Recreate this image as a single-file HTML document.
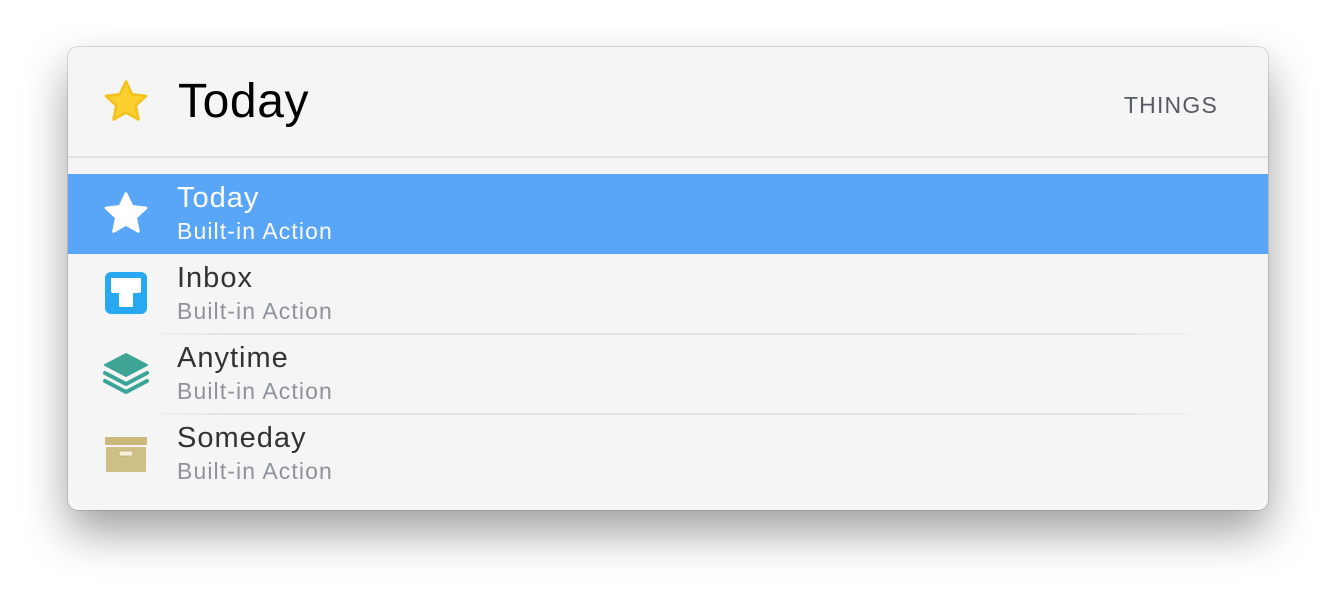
<!DOCTYPE html>
<html><head><style>
body{margin:0;width:1336px;height:598px;background:#fff;font-family:"Liberation Sans",sans-serif;overflow:hidden;position:relative}
.win{position:absolute;left:68px;top:47px;width:1200px;height:463px;background:#f5f5f5;border-radius:10px;box-shadow:0 22px 45px rgba(0,0,0,0.38),0 0 0 1px rgba(0,0,0,0.12);overflow:hidden}
.hdr{position:absolute;left:0;top:0;width:1200px;height:109px;border-bottom:2px solid #e2e2e2}
.ht{position:absolute;left:110px;top:27px;font-size:48px;letter-spacing:0.6px;color:#000}
.things{position:absolute;right:50px;top:45px;font-size:23px;letter-spacing:1.2px;color:#555a63}
.row{position:absolute;left:0;width:1200px;height:80px}
.row .t{position:absolute;left:109px;top:8px;font-size:29px;letter-spacing:1px;color:#333}
.row .s{position:absolute;left:109px;top:44px;font-size:23px;letter-spacing:1.1px;color:#8e939b}
.sel{background:#59a5f8}
.sel .t,.sel .s{color:#fff}
.sep{position:absolute;left:70px;width:1070px;height:2px;background:linear-gradient(90deg,rgba(220,220,220,0),#e0e0e0 10%,#e0e0e0 90%,rgba(220,220,220,0))}
.ic{position:absolute;left:34px;top:16px}
</style></head><body>
<div class="win">
 <div class="hdr">
  <svg style="position:absolute;left:34px;top:31px" width="48" height="46" viewBox="0 0 24 23"><path d="M12 1.8l3 6.4 7 .8-5.2 4.8 1.4 6.9L12 17.2l-6.2 3.5 1.4-6.9L2 9l7-.8z" fill="#fcd02e" stroke="#f2c31f" stroke-width="1.4" stroke-linejoin="round"/></svg>
  <div class="ht">Today</div>
  <div class="things">THINGS</div>
 </div>
 <div class="row sel" style="top:127px">
  <svg class="ic" width="48" height="46" viewBox="0 0 24 23"><path d="M12 1.8l3 6.4 7 .8-5.2 4.8 1.4 6.9L12 17.2l-6.2 3.5 1.4-6.9L2 9l7-.8z" fill="#fff" stroke="#fff" stroke-width="1.4" stroke-linejoin="round"/></svg>
  <div class="t">Today</div><div class="s">Built-in Action</div>
 </div>
 <div class="row" style="top:207px">
  <svg class="ic" style="left:36px;top:17px" width="44" height="44" viewBox="0 0 44 44"><rect x="1" y="1" width="42" height="42" rx="6" fill="#29a8f2"/><path d="M7 7h30v13a2 2 0 0 1-2 2h-6v13a1 1 0 0 1-1 1h-12a1 1 0 0 1-1-1v-13h-6a2 2 0 0 1-2-2z" fill="#fff"/></svg>
  <div class="t">Inbox</div><div class="s">Built-in Action</div>
 </div>
 <div class="sep" style="top:286px"></div>
 <div class="row" style="top:287px">
  <svg class="ic" style="left:34px;top:17px" width="48" height="46" viewBox="0 0 48 46"><path d="M3 30l21 11 21-11" fill="none" stroke="#3aa597" stroke-width="4" stroke-linecap="round" stroke-linejoin="round"/><path d="M3 22l21 11 21-11" fill="none" stroke="#3aa597" stroke-width="4" stroke-linecap="round" stroke-linejoin="round"/><path d="M24 3l21 11-21 11-21-11z" fill="#3ea596" stroke="#3ea596" stroke-width="2" stroke-linejoin="round"/></svg>
  <div class="t">Anytime</div><div class="s">Built-in Action</div>
 </div>
 <div class="sep" style="top:366px"></div>
 <div class="row" style="top:367px">
  <svg class="ic" style="left:36px;top:22px" width="44" height="38" viewBox="0 0 44 38"><rect x="1" y="1" width="42" height="8" rx="1" fill="#c9b87a"/><rect x="2" y="11" width="40" height="25" rx="1" fill="#cdbf86"/><rect x="15" y="15" width="14" height="5" rx="1.5" fill="#f5efd8" stroke="#bfae70" stroke-width="0.8"/></svg>
  <div class="t">Someday</div><div class="s">Built-in Action</div>
 </div>
</div>
</body></html>
